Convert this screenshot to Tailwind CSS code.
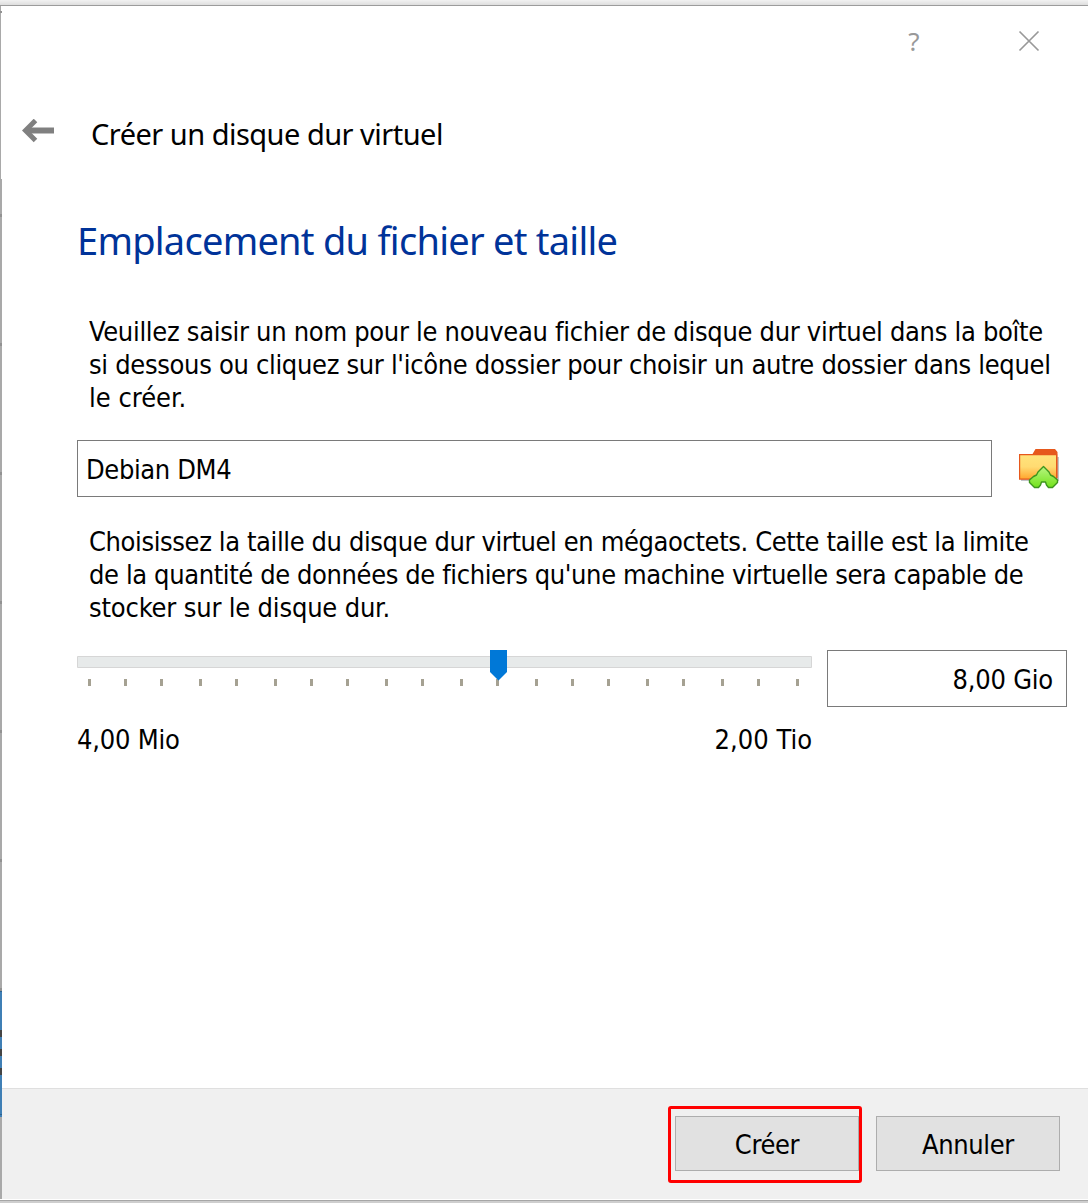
<!DOCTYPE html>
<html lang="fr">
<head>
<meta charset="utf-8">
<title>Créer un disque dur virtuel</title>
<script src="https://cdn.jsdelivr.net/npm/@tailwindcss/browser@4"></script>
</head>
<body class="w-[1088px] h-[1203px] overflow-hidden bg-white text-black font-['DejaVu_Sans_Condensed','DejaVu_Sans',sans-serif] font-stretch-condensed text-[27px] leading-[33px] tracking-[-0.37px]">
<div class="flex flex-col h-[1203px]">
  <div class="h-[5px] shrink-0 bg-linear-to-b from-[#f2f2f2] to-[#dedede]"></div>
  <div class="h-px shrink-0 bg-[#9c9c9c]"></div>
  <div class="flex h-[1193px] shrink-0">
    <!-- Window edge with the content behind it -->
    <svg class="w-[2px] h-[1193px] shrink-0" viewBox="0 6 2 1193" shape-rendering="crispEdges">
      <path fill="#a9a9a9" d="M0 6h1v173H0zM0 179h2v1020H0z"/>
      <path fill="#929292" d="M0 11h2v2H0zM0 214h2v3H0zM0 343h2v3H0zM0 472h2v3H0zM0 601h2v3H0zM0 730h2v3H0zM0 859h2v3H0zM0 988h2v3H0z"/>
      <path fill="#3f7fb5" d="M0 991h2v126H0z"/>
      <path fill="#444" d="M0 1030h2v7H0zM0 1049h2v7H0zM0 1068h2v7H0z"/>
      <path fill="#2b628f" d="M0 991h2v1H0zM0 1114h2v1H0z"/>
    </svg>
    <div class="flex flex-col w-[1086px]">
      <header class="flex h-[74px] justify-end pt-[18px] pr-[48px] text-[#999]">
        <span class="w-[20px] mr-[94px] text-center text-[26px] leading-[34px] tracking-normal font-['Noto_Sans',sans-serif] font-stretch-normal">?</span>
        <svg class="w-[22px] h-[22px] mt-[6px]" viewBox="0 0 22 22" fill="none" stroke="#999" stroke-width="1.7"><path d="M1.5 1.5l19 19M20.500 1.500l-19 19"/></svg>
      </header>
      <div class="flex h-[100px] pl-[20px]">
        <svg class="w-[32px] h-[24px] mt-[39px]" viewBox="0 0 32 24" fill="none" stroke="#808080"><path stroke-width="6" d="M4 11.500h28"/><path stroke-width="5" d="M13.500 1.500L3.500 11.500l10 10"/></svg>
        <h1 class="ml-[37px] mt-[34px] text-[29px] leading-[40px] tracking-[-0.52px] font-['Noto_Sans',sans-serif] font-stretch-normal whitespace-nowrap">Créer un disque dur virtuel</h1>
      </div>
      <main class="flex flex-col h-[908px] pl-[75px] pr-[21px]">
        <h2 class="mt-[34px] h-[52px] text-[38px] leading-[52px] tracking-[-0.74px] font-['Noto_Sans',sans-serif] font-stretch-normal text-[#003399] whitespace-nowrap">Emplacement du fichier et taille</h2>
        <p class="mt-[49px] ml-[12px] whitespace-nowrap"><span class="tracking-[-0.3px]">Veuillez saisir un nom pour le nouveau fichier de disque dur virtuel dans la boîte</span><br><span class="tracking-[-0.32px]">si dessous ou cliquez sur l'icône dossier pour choisir un autre dossier dans lequel</span><br><span class="tracking-normal">le créer.</span></p>
        <div class="flex mt-[26px] h-[57px]">
          <div class="w-[915px] h-[57px] border border-[#7a7a7a] pl-[8px] leading-[57px]">Debian DM4</div>
          <svg class="ml-[26px] mt-[7px] w-[42px] h-[43px]" viewBox="0 0 42 43">
            <defs>
              <linearGradient id="f" x1="0" y1="0" x2="0" y2="1"><stop stop-color="#ffe47c"/><stop offset=".5" stop-color="#ffdb72"/><stop offset="1" stop-color="#ffa52d"/></linearGradient>
              <linearGradient id="g" x1="0" y1="0" x2="0" y2="1"><stop stop-color="#b8f582"/><stop offset="1" stop-color="#73e21b"/></linearGradient>
            </defs>
            <path fill="#c3c5ca" d="M3 10h38v24H3z"/>
            <path fill="#e6581c" d="M14.500 7l3-5h19.500l2.500 3v26h-3V7z"/>
            <path fill="url(#f)" stroke="#e6581c" stroke-width="1.200" d="M1.600 7.600h37v24.500h-37z"/>
            <path fill="url(#g)" stroke="#3d951e" stroke-width="1.400" stroke-linejoin="round" d="M25.500 19.500L20 25l-1.500 3-3 1.500L11.500 33v2.500l5 5h4l2-2.500 1-3h4l1 3 2 2.500h4l5-5V33l-4-3.500-3-1.500-1.500-3z"/>
          </svg>
        </div>
        <p class="mt-[28px] ml-[12px] whitespace-nowrap tracking-[-0.39px]">Choisissez la taille du disque dur virtuel en mégaoctets. Cette taille est la limite<br>de la quantité de données de fichiers qu'une machine virtuelle sera capable de<br><span class="tracking-[-0.18px]">stocker sur le disque dur.</span></p>
        <div class="flex mt-[26px]">
          <div class="w-[735px]">
            <svg class="block w-[735px] h-[40px]" viewBox="77 650 735 40">
              <path fill="#e7eaea" stroke="#d6d6d6" d="M77.500 656.500h734v11h-734z"/>
              <path fill="#a5a192" d="M88 679h3v7h-3zM124 679h3v7h-3zM160 679h3v7h-3zM199 679h3v7h-3zM235 679h3v7h-3zM274 679h3v7h-3zM310 679h3v7h-3zM346 679h3v7h-3zM385 679h3v7h-3zM421 679h3v7h-3zM460 679h3v7h-3zM496 679h3v7h-3zM535 679h3v7h-3zM571 679h3v7h-3zM607 679h3v7h-3zM646 679h3v7h-3zM682 679h3v7h-3zM721 679h3v7h-3zM757 679h3v7h-3zM796 679h3v7h-3z"/>
              <path fill="#0078d7" d="M490 650h17v22l-8.500 8.500-8.500-8.500z"/>
            </svg>
            <div class="flex justify-between mt-[33px] whitespace-nowrap"><span class="tracking-[-0.22px]">4,00 Mio</span><span class="tracking-normal">2,00 Tio</span></div>
          </div>
          <div class="ml-[15px] w-[240px] h-[57px] border border-[#7a7a7a] pr-[13px] text-right leading-[57px] tracking-[-0.2px]">8,00 Gio</div>
        </div>
      </main>
      <footer class="flex h-[111px] bg-[#f0f0f0] border-t border-[#dfdfdf] pl-[666px] pt-[17px]">
        <div class="w-[194px] h-[77px] border-3 border-[#ff0000] rounded-[3px] pl-[4px] pt-[7px]">
          <div class="w-[184px] h-[55px] border border-[#adadad] bg-[#e1e1e1] text-center leading-[55px]">Créer</div>
        </div>
        <div class="ml-[14px] mt-[10px] w-[184px] h-[55px] border border-[#adadad] bg-[#e1e1e1] text-center leading-[55px]">Annuler</div>
      </footer>
    </div>
  </div>
  <div class="h-px shrink-0 bg-white"></div>
  <div class="h-px shrink-0 bg-[#a6a6a6]"></div>
  <div class="h-[2px] shrink-0 bg-[#cecece]"></div>
</div>
</body>
</html>
